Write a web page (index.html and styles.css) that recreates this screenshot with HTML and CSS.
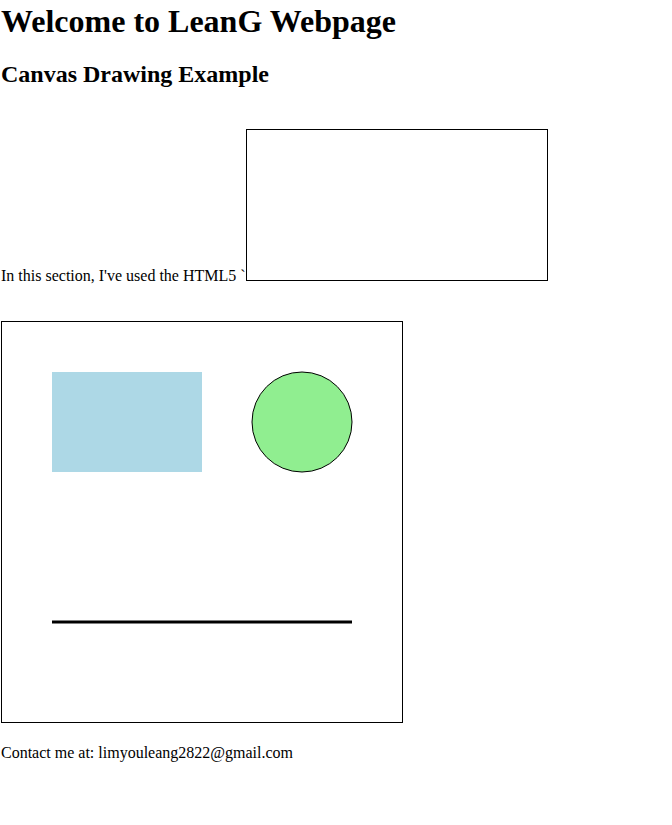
FILE: index.html
```html
<!DOCTYPE html>
<html>
<head>
<meta charset="utf-8">
<title>LeanG Webpage</title>
<link rel="stylesheet" href="styles.css">
</head>
<body>
<header class="top">
<h1 class="title">Welcome to LeanG Webpage</h1>
</header>
<section class="drawing">
<h2 class="subtitle">Canvas Drawing Example</h2>
<p class="intro">In this section, I've used the HTML5 `<span class="empty-canvas"></span></p>
<div class="board">
<svg width="400" height="400" viewBox="0 0 400 400">
<rect x="50" y="50" width="150" height="100" fill="#add8e6"/>
<circle cx="300" cy="100" r="50" fill="#90ee90" stroke="#000" stroke-width="1"/>
<line x1="50" y1="300" x2="350" y2="300" stroke="#000" stroke-width="3"/>
</svg>
</div>
</section>
<footer class="contact">
<p class="contact-text">Contact me at: limyouleang2822@gmail.com</p>
</footer>
</body>
</html>
```
FILE: styles.css
```css
html, body {
  margin: 0;
  padding: 0;
  background: #fff;
}
body {
  font-family: "Liberation Serif", "Times New Roman", serif;
  font-size: 16px;
  color: #000;
  padding-left: 1px;
}
.top {
  padding-top: 3px;
}
.title {
  font-size: 32px;
  font-weight: bold;
  margin: 0 0 21px 0;
}
.subtitle {
  font-size: 24px;
  font-weight: bold;
  margin: 0 0 20px 0;
}
.intro {
  margin: 0;
  padding-top: 21px;
}
.empty-canvas {
  display: inline-block;
  width: 300px;
  height: 150px;
  border: 1px solid #000;
}
.board {
  margin-top: 36px;
  width: 400px;
  height: 400px;
  border: 1px solid #000;
}
.board svg {
  display: block;
}
.contact-text {
  margin: 21px 0 16px 0;
}
```
